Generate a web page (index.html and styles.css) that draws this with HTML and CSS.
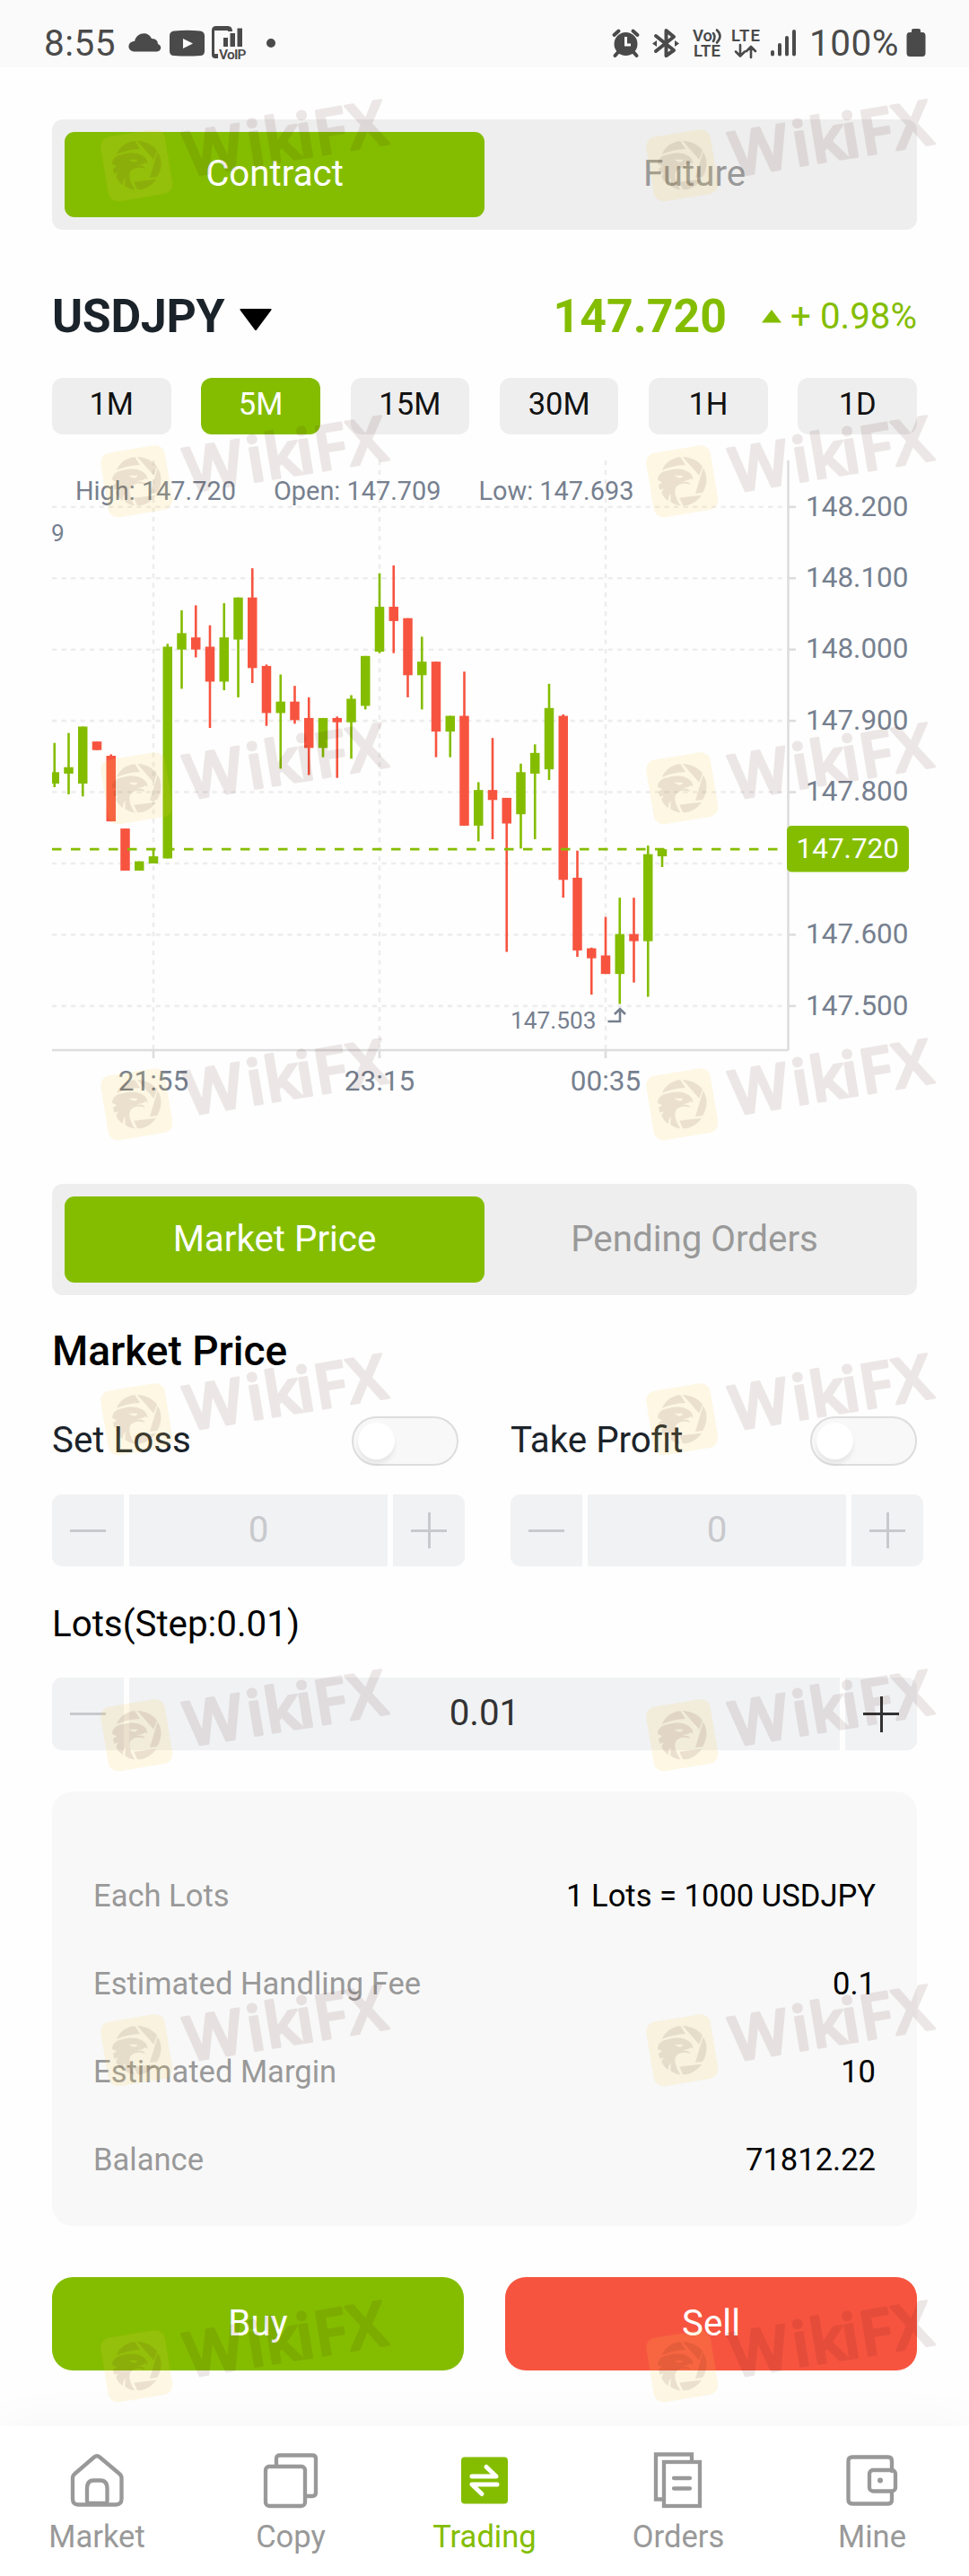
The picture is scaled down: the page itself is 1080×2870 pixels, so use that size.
FILE: index.html
```
<!DOCTYPE html>
<html lang="en">
<head>
  <meta charset="UTF-8" />
  <meta name="viewport" content="width=device-width, initial-scale=1.0"/>
  <title>Trading</title>
  <link rel="stylesheet" href="styles.css">
</head>
<body>
  <div class="status">
    <span class="time">8:55</span>
    <svg class="st-left" width="180" height="75" viewBox="136 0 180 75">
      <path d="M149 57.500C141 56 142 46 150 46C152 36 165 34 169 43C174 43 176 46 176 49C181 51 180 57 175 57.500Z"/>
      <path fill-rule="evenodd" d="M194 34.500Q209 33 223 34.500Q228 35 228 40V57Q228 62 223 62Q209 63 194 62Q189 62 189 57V40Q189 35 194 34.500ZM204 43V54L215 48.500Z"/>
      <path d="M236 34Q236 29 241 29H254Q259 29 259 35H254V34H239V60H243V65H240Q236 65 236 61Z"/>
      <path d="M249 42H254V52H249ZM256.500 37H262V52H256.500ZM264.500 31.500H270V52H264.500Z"/>
      <text x="244" y="65.500" class="voip" textLength="30.5">VoIP</text>
      <circle cx="302" cy="48" r="5"/>
    </svg>
    <svg class="st-right" width="214" height="75" viewBox="680 0 214 75">
      <circle cx="697.500" cy="49" r="13"/>
      <path class="ln" d="M684.500 39L689.500 34.500M710.500 39L705.500 34.500M689 58L685.500 62M706 58L709.500 62"/>
      <path class="cut" d="M697.500 41V50H703"/>
      <path class="ln" d="M731 40L751 56L742.500 62V34L751 41L731 57"/>
      <path d="M727 48.500L732 45V52ZM757 48.500L752 45V52Z"/>
      <text x="772" y="46" class="lte">Vo</text>
      <path class="ln thin" d="M795 37Q798 41 795 46M799 33.500Q806 40 799 47.500"/>
      <text x="773" y="63" class="lte" textLength="30">LTE</text>
      <text x="815" y="46" class="lte" textLength="32">LTE</text>
      <path class="ln thin" d="M825 50V62M820 57.500L825 62.500L830 57.500M837 64V52M832 57L837 52L842 57"/>
      <path class="ln" d="M861 58V60.500M869 50V60.500M877 42V60.500M885 35V60.500"/>
    </svg>
    <span class="percent">100%</span>
    <svg class="battery" width="22" height="32" viewBox="0 0 22 32"><path d="M6 4V2Q6 0 8 0H14Q16 0 16 2V4H18Q21.500 4 21.500 8V27Q21.500 31 18 31H4Q.5 31 .5 27V8Q.5 4 4 4Z"/></svg>
  </div>

  <div class="main">
    <div class="tabs">
      <div class="tab active">Contract</div>
      <div class="tab">Future</div>
    </div>

    <div class="symbol">
      <span class="pair">USDJPY</span>
      <svg width="36" height="25" viewBox="0 0 36 25"><path d="M1.500 0H34.500Q36.500 0 35 2L19 23.500Q18 25 17 23.500L1 2Q-.5 0 1.500 0Z"/></svg>
      <span class="price">147.720</span>
      <svg class="up" width="22" height="15" viewBox="0 0 22 15"><path d="M0 14.500L11 0L22 14.500Z"/></svg>
      <span class="change">+ 0.98%</span>
    </div>

    <div class="periods">
      <div class="period">1M</div>
      <div class="period active">5M</div>
      <div class="period">15M</div>
      <div class="period">30M</div>
      <div class="period">1H</div>
      <div class="period">1D</div>
    </div>

    <svg class="chart" id="chart" width="964" height="720" viewBox="58 513 964 720"></svg>

    <div class="tabs orders">
      <div class="tab active">Market Price</div>
      <div class="tab">Pending Orders</div>
    </div>

    <h2>Market Price</h2>

    <div class="limits">
      <div class="limit">
        <div class="limit-head"><span>Set Loss</span><i class="switch"></i></div>
        <div class="stepper">
          <button class="minus off"></button><div class="value off">0</div><button class="plus off"></button>
        </div>
      </div>
      <div class="limit">
        <div class="limit-head"><span>Take Profit</span><i class="switch"></i></div>
        <div class="stepper">
          <button class="minus off"></button><div class="value off">0</div><button class="plus off"></button>
        </div>
      </div>
    </div>

    <div class="lots-label">Lots(Step:0.01)</div>
    <div class="stepper lots">
      <button class="minus off"></button><div class="value">0.01</div><button class="plus"></button>
    </div>

    <div class="card">
      <div class="row"><span>Each Lots</span><b>1 Lots = 1000 USDJPY</b></div>
      <div class="row"><span>Estimated Handling Fee</span><b>0.1</b></div>
      <div class="row"><span>Estimated Margin</span><b>10</b></div>
      <div class="row"><span>Balance</span><b>71812.22</b></div>
    </div>

    <div class="actions">
      <button class="buy">Buy</button>
      <button class="sell">Sell</button>
    </div>
  </div>

  <div class="nav">
    <div class="nav-item">
      <svg viewBox="0 0 64 64"><path d="M29 6.500Q32 4 35 6.500L57 25Q59.500 27 59.500 30V53Q59.500 59.500 53 59.500H11Q5 59.500 5 53V30Q5 27 7.500 25Z"/><path d="M21 55V42Q21 32.500 28 32.500H36Q43.500 32.500 43.500 42V55Q43.500 58 41 58H24Q21 58 21 55Z"/></svg>
      <span>Market</span>
    </div>
    <div class="nav-item">
      <svg viewBox="0 0 64 64"><path d="M16 16V8Q16 4.500 20 4.500H56Q60 4.500 60 8V46Q60 50 56 50H50"/><rect x="4" y="17" width="44" height="44" rx="4"/></svg>
      <span>Copy</span>
    </div>
    <div class="nav-item active">
      <svg viewBox="0 0 64 64"><rect class="fill" x="6" y="6.500" width="52" height="52" rx="4"/><path class="white" d="M18 28H45L34 17.500M46 37H18L29 47.500"/></svg>
      <span>Trading</span>
    </div>
    <div class="nav-item">
      <svg viewBox="0 0 64 64"><path d="M15 53.500H7V3.500H47V11"/><rect x="16" y="12" width="40" height="49"/><path d="M27 30H45M27 41.500H45"/></svg>
      <span>Orders</span>
    </div>
    <div class="nav-item">
      <svg viewBox="0 0 64 64"><path d="M54 22V11Q54 6.500 50 6.500H10Q5.500 6.500 5.500 11V54Q5.500 58.500 10 58.500H50Q54 58.500 54 54V46"/><rect x="29" y="21" width="29" height="23.500" rx="4"/><circle class="fill" cx="41" cy="32.500" r="3"/></svg>
      <span>Mine</span>
    </div>
  </div>

  <div class="watermarks" id="watermarks"></div>

<script>
// open, high, low, close in thousandths above 147
const candles = [
  [812, 869, 807, 828], [826, 883, 797, 835], [812, 892, 794, 892], [871, 871, 859, 859],
  [851, 853, 759, 759], [749, 749, 690, 690], [690, 703, 690, 703], [700, 721, 700, 710],
  [707, 1008, 707, 1004], [1000, 1055, 945, 1023], [1017, 1062, 989, 1000], [1004, 1034, 890, 955],
  [955, 1065, 943, 1017], [1014, 1073, 933, 1073], [1073, 1114, 953, 974], [977, 979, 893, 911],
  [911, 965, 833, 927], [927, 949, 896, 901], [904, 933, 824, 862], [862, 904, 849, 904],
  [904, 906, 820, 898], [898, 936, 847, 931], [921, 991, 916, 991], [997, 1107, 995, 1060],
  [1060, 1118, 995, 1040], [1044, 1044, 933, 964], [964, 1018, 916, 983], [983, 983, 849, 885],
  [885, 907, 849, 907], [907, 969, 753, 753], [753, 814, 731, 803], [803, 876, 734, 789],
  [792, 792, 576, 756], [769, 840, 721, 828], [826, 867, 734, 855], [832, 952, 817, 918],
  [907, 909, 652, 677], [680, 718, 569, 578], [581, 582, 516, 567], [571, 625, 545, 545],
  [545, 652, 503, 601], [601, 652, 533, 591], [591, 725, 513, 713], [710, 720, 695, 720]
];
const last = 720;
const axisX = 878.5, axisY = 1170;
const y = v => 564.8 + (1200 - v) * 0.7944;
const fmt = v => (147 + v / 1000).toFixed(3);

let out = '';
for (let v = 1200; v >= 500; v -= 100) {
  out += `<path class="grid" d="M58 ${y(v)}H878"/><path class="axis" d="M879 ${y(v)}H887"/>`;
  if (v !== 700) out += `<text class="tick" x="898" y="${y(v) + 9.7}">${fmt(v)}</text>`;
}
[['21:55', 171], ['23:15', 423], ['00:35', 675]].forEach(([t, x]) => {
  out += `<path class="grid" d="M${x} 513V1170"/><path class="axis" d="M${x} 1171V1179"/>`;
  out += `<text class="tick mid" x="${x}" y="1215">${t}</text>`;
});
out += `<path class="axis" d="M${axisX} 513V${axisY}M58 ${axisY}H${axisX}"/>`;
candles.forEach(([o, h, l, c], i) => {
  const x = 60.75 + i * 15.75;
  const top = y(Math.max(o, c)), bottom = y(Math.min(o, c));
  out += `<g class="${c > o ? 'bull' : 'bear'}">
    <rect x="${x - 1.3}" y="${y(h)}" width="2.6" height="${y(l) - y(h)}"/>
    <rect x="${x - 5.25}" y="${top}" width="10.5" height="${bottom - top}"/></g>`;
});
out += `<text class="small" x="569" y="1145.500">${fmt(503)}</text>
  <path class="mark" d="M677.500 1138H691V1124M685 1130L691 1124L697 1130"/>
  <path class="last" d="M58 ${y(last)}H878"/>
  <rect class="tag" x="877" y="920" width="136" height="51.5" rx="5"/>
  <text class="tick on" x="887.5" y="956">${fmt(last)}</text>
  <text class="title" x="84" y="556.700">High: 147.720</text>
  <text class="title" x="305" y="556.700">Open: 147.709</text>
  <text class="title" x="533.5" y="556.700">Low: 147.693</text>
  <text class="small" x="57" y="602.500">9</text>`;
document.getElementById('chart').innerHTML = out;

const mark = `<svg viewBox="0 0 360 150">
  <rect class="wm-box" x="14" y="50" width="72.5" height="72.5" rx="11" transform="rotate(-9.4 50.3 86.3)"/>
  <g class="wm-ink" transform="scale(.3333)">
    <path d="M84 221C95 195 120 179 145 178L162 204Q120 206 84 221Z"/>
    <path d="M153 177C182 178 206 192 219 209L208 239Z"/>
    <path d="M221 214C237 238 236 270 219 297L195 300Z"/>
    <path d="M216 305C198 330 172 342 153 339L142 314Z"/>
    <path fill-rule="evenodd" d="M69 254C70 236 84 225 102 223C124 216 152 216 165 224C180 230 188 241 187 254L180 249C172 256 162 257 151 259C168 260 176 261 178 270C160 263 134 266 128 284C124 300 132 320 145 340C130 338 121 334 112 327L113 300C106 308 104 316 105 325C92 316 85 304 82 296L89 283L76 287C74 281 73 276 72 271L84 262ZM124 239L153 239C153 246 144 250 136 246Z"/>
  </g>
  <text class="wm-ink wm-text" transform="translate(108 99) rotate(-9.4)" x="0 70 90 126 146 184">WikiFX</text>
</svg>`;
document.getElementById('watermarks').innerHTML = mark.repeat(16);
</script>
</body>
</html>
```
FILE: styles.css
```
body {
  font-family: Roboto, 'Liberation Sans', sans-serif;
  background-color: #fefefe;
  color: #000;
  margin: 0;
  width: 1080px;
  position: relative;
}
svg { display: block; flex: none; }
button { border: none; padding: 0; font-family: inherit; }

.status {
  height: 75px;
  box-sizing: border-box;
  padding: 0 48px 0 49px;
  background-color: #fafafa;
  display: flex;
  align-items: center;
  color: #4a4a4a;
  font-size: 40.500px;
}
.status svg { fill: #4a4a4a; }
.time, .percent { line-height: 54px; padding-top: 21px; white-space: nowrap; }
.time { width: 87px; letter-spacing: .5px; }
.st-right { margin-left: auto; }
.percent { width: 108px; padding-left: 8px; letter-spacing: .5px; }
.status .battery { margin-top: 20px; }
.status .ln { fill: none; stroke: #4a4a4a; stroke-width: 4; stroke-linecap: round; stroke-linejoin: round; }
.status .thin { stroke-width: 2.6; }
.status .cut { fill: none; stroke: #fafafa; stroke-width: 3; }
.voip { font-size: 15.500px; font-weight: 600; }
.lte { font-size: 18.500px; font-weight: 600; }

.main { padding: 58px 58px 0; }
.tabs {
  height: 123px;
  box-sizing: border-box;
  padding: 14px;
  border-radius: 12px;
  background-color: #eee;
  display: flex;
}
.tab {
  flex: 1;
  display: flex;
  align-items: center;
  justify-content: center;
  border-radius: 11px;
  padding-bottom: 2px;
  font-size: 40.300px;
  color: #999;
}
.tab.active { background-color: #84bd00; color: #fff; }
.orders { height: 124px; margin-top: 86px; }

.symbol { display: flex; align-items: center; height: 60px; margin-top: 66px; }
.pair { width: 194px; margin-right: 15px; font-size: 51.840px; font-weight: 700; letter-spacing: -.3px; color: #1b232a; }
.symbol svg { margin-top: 8px; }
.price { font-size: 51.840px; font-weight: 700; color: #84bd00; margin-left: auto; margin-right: 39px; }
.symbol .up { fill: #84bd00; margin: 0 10px 0 0; }
.change { font-size: 40.300px; color: #84bd00; }

.periods { display: flex; justify-content: space-between; margin-top: 39px; }
.period {
  width: 132.500px;
  height: 63px;
  line-height: 58px;
  border-radius: 12px;
  background-color: #eee;
  text-align: center;
  font-size: 34.560px;
  color: #111;
}
.period.active { background-color: #84bd00; color: #fff; }

.chart { margin-top: 29px; }
.chart text { fill: #76808f; }
.tick { font-size: 31.500px; }
.chart .on { fill: #fff; }
.mid { text-anchor: middle; }
.small { font-size: 26.250px; }
.title { font-size: 28.880px; }
.grid { stroke: #ededed; stroke-width: 2.6; stroke-dasharray: 5.250 5.250; }
.axis { fill: none; stroke: #ddd; stroke-width: 2.6; }
.last { stroke: #84bd00; stroke-width: 2.6; stroke-dasharray: 10.500 10.500; }
.mark { fill: none; stroke: #76808f; stroke-width: 2.6; }
.bull, .tag { fill: #84bd00; }
.bear { fill: #f75440; }

h2 { font-size: 46px; font-weight: 500; line-height: 50px; margin: 37px 0 48px; }
.limits { display: grid; grid-template-columns: 453px 453px; column-gap: 58px; }
.limit-head {
  height: 55px;
  display: flex;
  align-items: center;
  justify-content: space-between;
  font-size: 40.300px;
  color: #1b232a;
}
.limit-head span { margin-top: -3px; }
.switch {
  width: 115px;
  height: 51px;
  border: 2px solid #ddd;
  border-radius: 28px;
  background-color: #f8f8f8;
}
.switch::before {
  content: '';
  display: block;
  width: 41px;
  height: 41px;
  margin: 5px;
  border-radius: 50%;
  background-color: #fff;
  box-shadow: 0 5px 5px rgba(0, 0, 0, .07);
}
.stepper { display: flex; gap: 6px; width: 460px; height: 80px; margin-top: 32px; }
.stepper button {
  width: 80px;
  background: linear-gradient(currentColor, currentColor) center / 40px 3px no-repeat #f1f2f4;
  color: #323233;
}
.stepper .plus {
  background: linear-gradient(currentColor, currentColor) center / 40px 3px no-repeat,
    linear-gradient(currentColor, currentColor) center / 3px 40px no-repeat #f1f2f4;
}
.stepper .minus { border-radius: 11px 0 0 11px; }
.stepper .plus { border-radius: 0 11px 11px 0; }
.value {
  flex: 1;
  background-color: #f1f2f4;
  text-align: center;
  font-size: 40.300px;
  line-height: 79px;
  color: #323233;
}
.stepper .off { color: #c8c9cc; }
.lots-label { font-size: 40.300px; line-height: 50px; margin-top: 40px; }
.lots { width: 964px; height: 81px; margin-top: 34px; }

.card {
  height: 484px;
  box-sizing: border-box;
  margin-top: 46px;
  padding: 67px 46px 0;
  border-radius: 23px;
  background-color: #f8f8f8;
}
.row { display: flex; justify-content: space-between; line-height: 98px; font-size: 34.560px; }
.row span { color: #999; }
.row b { font-weight: 400; }

.actions { display: flex; gap: 46px; margin-top: 57px; }
.actions button {
  flex: 1;
  height: 104px;
  padding-bottom: 2px;
  border-radius: 23px;
  font-size: 40.300px;
  color: #fff;
}
.buy { background-color: #84bd00; }
.sell { background-color: #f75440; }

.nav {
  display: flex;
  height: 167px;
  margin-top: 62px;
  background-color: #fff;
  box-shadow: 0 0 58px rgba(0, 0, 0, .04);
}
.nav-item { flex: 1; text-align: center; font-size: 34.560px; color: #999; }
.nav-item svg {
  width: 64px;
  height: 64px;
  margin: 28px auto 8px;
  fill: none;
  stroke: currentColor;
  stroke-width: 4.300;
  stroke-linecap: round;
}
.nav-item span { display: block; line-height: 46px; }
.nav-item.active { color: #84bd00; }
.nav-item .fill { fill: currentColor; stroke: none; }
.nav-item .white { stroke: #fff; stroke-width: 5; stroke-linejoin: round; }

.watermarks {
  position: absolute;
  top: 98px;
  left: 102px;
  display: grid;
  grid-template-columns: 360px 360px;
  column-gap: 248px;
  grid-template-rows: 352px 342px repeat(5, 351.600px) 150px;
  pointer-events: none;
}
.watermarks svg { width: 360px; height: 150px; overflow: visible; }
.wm-box { fill: rgba(250, 205, 70, .14); }
.wm-ink { fill: rgb(70, 20, 10); opacity: .095; }
.wm-text {
  font-family: 'Open Sans', sans-serif;
  font-size: 69px;
  font-weight: 600;
  stroke: rgb(70, 20, 10);
  stroke-width: 3;
  stroke-linejoin: round;
}
```
